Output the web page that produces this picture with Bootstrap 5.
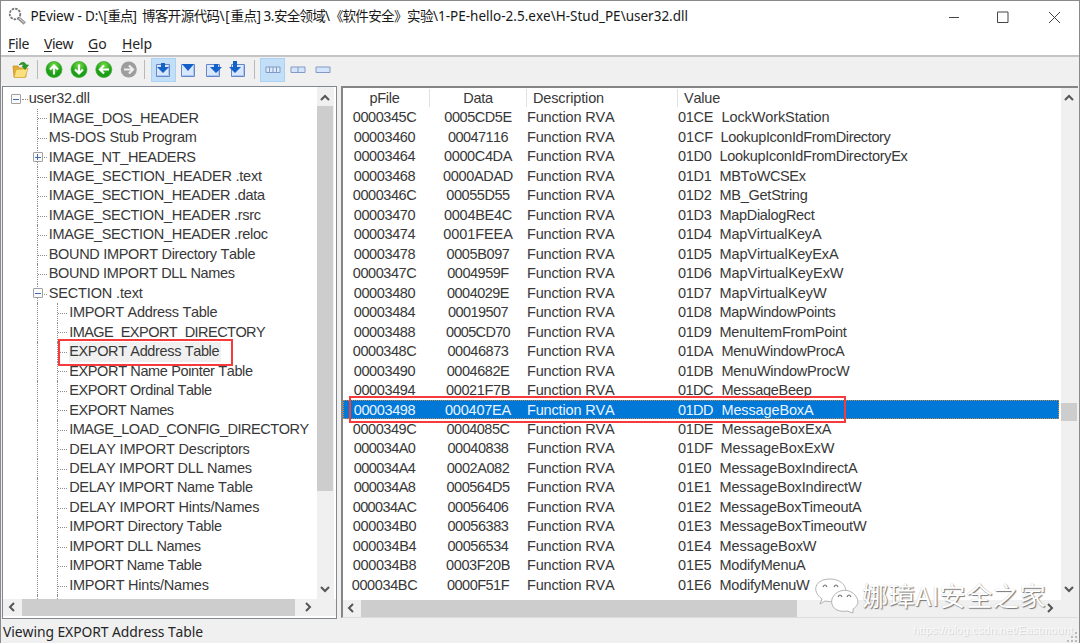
<!DOCTYPE html>
<html lang="zh-CN">
<head>
<meta charset="utf-8">
<title>PEview</title>
<link href="https://cdn.jsdelivr.net/npm/bootstrap@5.3.0/dist/css/bootstrap.min.css" rel="stylesheet">
<style>
html,body{height:100%;overflow:hidden}
body{font-family:"Liberation Sans","Noto Sans CJK SC",sans-serif;font-size:14.5px;line-height:19.48px;color:#383838;background:#f0f0f0}
svg{display:block;flex:none}
.win{width:1080px;height:643px;border:1px solid #8a8a8a;border-bottom:0}
.titlebar{height:32px;background:#fff;padding-left:5px;font-family:"Noto Sans","Noto Sans CJK SC",sans-serif;font-size:13.5px;color:#181818}
.titletext{margin-left:2.5px}
.fit{display:inline-block;flex:none;overflow:visible;font-kerning:none;white-space:pre}
.menus{height:22px;background:#fff;padding-left:7px;font-family:"Noto Sans","Open Sans",sans-serif;font-size:14px;color:#252525}
.menus .fit{margin-right:15px}
.menus u{text-underline-offset:2px;text-decoration-thickness:1px}
.tools{height:31px;border-top:2px solid #c4c4c4;background:#f0f0f0;padding-left:10px;padding-bottom:4px}
.rule{width:1.4px;height:19px;background:#b9b9b9}
.tool{width:25px;height:24px}
.tool.on{background:#c2dff7;border:1px solid #a9d2f5}
.panes{height:533px;padding-left:1px}
.treepane{width:335px;border:1px solid #828790;background:#fff;height:533px}
.listpane{width:737px;margin-left:4px;border-left:2px solid #858585;border-top:2px solid #858585;border-bottom:1px solid #dcdcdc;background:#fff;height:532px}
.view{height:512px;overflow:hidden}
.row2{height:19.48px;padding-top:1px}
#tree{padding-top:1.6px}
#tree .row2 .fit{margin-left:.7px}
.vbar{width:17px;background:#f0f0f0;height:512px;padding-right:1px}
.hbar{height:17px;background:#f0f0f0;flex:none}
.thumb{background:#cdcdcd}
.guide{border-left:1px dotted #8e8e8e;height:19.48px;flex:none}
.dash{height:0;border-top:1px dotted #8e8e8e;margin-top:1px;flex:none}
.knob{left:-5px;top:4.500px;width:10px;height:10px;border:1px solid #a0a0a0;border-radius:1px;background:#fafafa}
.knob:before{content:"";position:absolute;left:1px;right:1px;top:3.5px;height:1px;background:#4068b8}
.knob.plus:after{content:"";position:absolute;top:1px;bottom:1px;left:3.5px;width:1px;background:#4068b8}
.picked{background:#f0f0f0;padding-right:2px}
.c1{width:87px;padding-right:3px;border-right:1px solid transparent}
.c2{width:97px;border-right:1px solid transparent}
.c3{width:151px;border-right:1px solid transparent}
.head .c1,.head .c2,.head .c3{border-color:#e0e0e0}
.sel{background:#0078d7;color:#e8f4ff;outline:1px dotted #c28a4c;outline-offset:-1px;margin-right:2px}
.red{border:2px solid #f53b3b}
.status{height:24px;padding:2.5px 0 0 2px;font-family:"Noto Sans","Open Sans",sans-serif;font-size:13.9px;color:#252525}
.wechat{left:812px;top:574px}
.wm{left:861px;top:576px;font:26.2px/36px "Noto Sans CJK SC",sans-serif;color:#fff;text-shadow:1px 1px 1px #777,0 0 1px #bbb}
.url{left:912px;top:620px;font-size:11.2px;color:#fafafa;text-shadow:1px 1px 0 #d8d8d8}
</style>
</head>
<body>
<div class="win position-relative d-flex flex-column">
  <header class="titlebar d-flex align-items-center">
    <svg width="22" height="22" viewBox="0 0 22 22"><circle cx="9" cy="8" r="5.3" fill="#fff" stroke="#777" stroke-width="1.8" stroke-dasharray="2.5 1"/><path d="M12.5 12l6.3 5.6" stroke="#929292" stroke-width="3.3"/><path d="M13 12l5.500 5" stroke="#ddd" stroke-width="1"/></svg>
    <div class="titletext d-flex" id="title"></div>
    <svg class="ms-auto" width="130" height="24" viewBox="0 0 130 24" fill="none" stroke="#444" stroke-width="1"><path d="M-1 12.500H10M48.500 7h10.500v10.500h-10.500zM100 7l11 11M111 7l-11 11"/></svg>
  </header>
  <nav class="menus d-flex align-items-center"><span class="fit" data-w="21"><u>F</u>ile</span><span class="fit" data-w="29"><u>V</u>iew</span><span class="fit" data-w="19"><u>G</u>o</span><span class="fit" data-w="30"><u>H</u>elp</span></nav>
  <div class="tools d-flex align-items-center">
    <svg width="20" height="20" viewBox="0 0 20 20"><path d="M2 6h5l1 2h7v9H3z" fill="#e7ad32" stroke="#c18a20" stroke-width=".7"/><path d="M5 9.500l12-1-3 9H3z" fill="#fbe17d" stroke="#d4a233" stroke-width=".7"/><path d="M8 5c3-4 6-3 7 0h2.500L14 9.500 11 6h2c-1-2-2-2-5-1z" fill="#2c9b24" stroke="#187719" stroke-width=".6"/></svg>
    <div class="rule" style="margin:0 7px 0 5.500px"></div>
    <svg width="94" height="19" viewBox="0 0 94 19">
      <defs><radialGradient id="g" cy=".25"><stop offset="0" stop-color="#79dd4b"/><stop offset="1" stop-color="#1a9f16"/></radialGradient></defs>
      <g fill="url(#g)" stroke="#3ca72c" stroke-width=".7"><circle cx="9" cy="9.500" r="8"/><circle cx="34" cy="9.500" r="8"/><circle cx="58.800" cy="9.500" r="8"/></g><circle cx="83.800" cy="9.500" r="8" fill="#9d9d9d"/>
      <g fill="none" stroke="#fff" stroke-width="2.200"><path d="M9 14.500V5.500M5 9.500l4-4 4 4M34 4.500v9M30 9.500l4 4 4-4M64 9.500H55M59 5.500l-4 4 4 4"/><path d="M79 9.500h9M84 5.500l4 4-4 4" stroke="#eee"/></g>
    </svg>
    <div class="rule" style="margin:0 5.500px 0 5px"></div>
    <div class="tool on d-flex align-items-center justify-content-center"><svg width="18" height="18" viewBox="0 0 18 18"><use href="#sq"/><path d="M7 2h4v4h4l-6 6-6-6h4z" fill="#1260c8"/></svg></div>
    <div class="tool d-flex align-items-center justify-content-center"><svg width="18" height="18" viewBox="0 0 18 18"><g id="sq"><path d="M2.500 3.500h13v12h-13z" fill="#d8e7fc" stroke="#6687c7"/><path d="M3.500 14.500h11v-10" fill="none" stroke="#a9c4ef"/></g><path d="M3 3h12L9 10z" fill="#1260c8"/></svg></div>
    <div class="tool d-flex align-items-center justify-content-center"><svg width="18" height="18" viewBox="0 0 18 18"><use href="#sq"/><path d="M10 3h4v3h4l-6 6-6-6h4z" fill="#1260c8"/></svg></div>
    <div class="tool d-flex align-items-center justify-content-center"><svg width="18" height="18" viewBox="0 0 18 18"><use href="#sq"/><path d="M4 0h4v6h4l-6 6-6-6h4z" fill="#1260c8"/></svg></div>
    <div class="rule" style="margin:0 5px 0 3px"></div>
    <div class="tool on d-flex align-items-center justify-content-center"><svg width="16" height="8" viewBox="0 0 16 8"><path d="M1 1h14v5.500H1zM4.500 1v6M8 1v6M11.500 1v6" fill="#dceafd" stroke="#8399c4"/></svg></div>
    <div class="tool d-flex align-items-center justify-content-center"><svg width="16" height="8" viewBox="0 0 16 8"><path d="M1 1h14v5.500H1zM8 1v6" fill="#d3e4fb" stroke="#8399c4"/></svg></div>
    <div class="tool d-flex align-items-center justify-content-center"><svg width="16" height="8" viewBox="0 0 16 8"><path d="M1 1h14v5.500H1z" fill="#d3e4fb" stroke="#8399c4"/></svg></div>
  </div>
  <main class="panes d-flex">
    <section class="treepane d-flex flex-column">
      <div class="d-flex">
        <div class="view flex-grow-1" id="tree"></div>
        <div class="vbar d-flex flex-column align-items-center"><svg width="16" height="19" viewBox="0 0 16 19"><path d="M4 13l4-4 4 4" fill="none" stroke="#555" stroke-width="2"/></svg><div class="thumb w-100" style="height:385px"></div><svg class="mt-auto" width="16" height="17" viewBox="0 0 16 17"><path d="M4 5l4 4 4-4" fill="none" stroke="#555" stroke-width="2"/></svg></div>
        <div style="width:2px;background:#fff"></div>
      </div>
      <div class="hbar d-flex"><svg width="19" height="17" viewBox="0 0 19 17"><path d="M11 4L7 8l4 4" fill="none" stroke="#555" stroke-width="2"/></svg><div class="thumb" style="width:273px"></div><svg width="24" height="17" viewBox="0 0 24 17"><path d="M11 4l4 4-4 4" fill="none" stroke="#555" stroke-width="2"/></svg></div>
    </section>
    <section class="listpane d-flex flex-column">
      <div class="d-flex">
        <div class="view flex-grow-1" id="list"></div>
        <div class="vbar d-flex flex-column align-items-center"><svg width="16" height="17" viewBox="0 0 16 17"><path d="M4 12l4-4 4 4" fill="none" stroke="#555" stroke-width="2"/></svg><div class="thumb w-100" style="height:18px;margin-top:298px"></div><svg class="mt-auto" width="16" height="17" viewBox="0 0 16 17"><path d="M4 4l4 4 4-4" fill="none" stroke="#555" stroke-width="2"/></svg></div>
      </div>
      <div class="hbar d-flex"><svg width="18" height="17" viewBox="0 0 18 17"><path d="M10 4L6 8l4 4" fill="none" stroke="#555" stroke-width="2"/></svg><div class="thumb" style="width:436px"></div><svg class="ms-auto" width="34" height="17" viewBox="0 0 34 17"><path d="M4 4l4 4-4 4" fill="none" stroke="#555" stroke-width="2"/></svg></div>
    </section>
  </main>
  <footer class="status d-flex"><span class="fit" data-w="200">Viewing EXPORT Address Table</span></footer>
  <svg class="position-absolute bottom-0 end-0" width="12" height="12" viewBox="0 0 12 12" fill="#bbb"><path d="M8 1h2v2H8zM8 5h2v2H8zM8 9h2v2H8zM4 5h2v2H4zM4 9h2v2H4zM0 9h2v2H0z"/></svg>
  <div class="red position-absolute" style="left:57px;top:338px;width:175px;height:27px"></div>
  <div class="red position-absolute" style="left:348px;top:395px;width:497px;height:27px"></div>
  <svg class="wechat position-absolute" width="46" height="42" viewBox="0 0 46 42"><g fill="#fff" stroke="#aaa" stroke-width=".9"><path d="M7 29l2-5C-2 16 2 4 17 4c13 0 19 10 14 17s-11 6-19 5z"/><path d="M40 38l-6-2c-11 2-17-5-15-12 3-9 16-12 23-4 5 6 3 11-2 14z"/></g><path d="M10 12q2-4 4 0M21 12q2-4 4 0M25 22q2-4 4 0M34 22q2-4 4 0" fill="none" stroke="#777" stroke-width="1.200"/></svg>
  <span class="wm position-absolute fit" data-w="184">娜璋AI安全之家</span>
  <span class="url position-absolute fit" data-w="160">https://blog.csdn.net/Eastmount</span>
</div>
<script src="https://cdn.jsdelivr.net/npm/bootstrap@5.3.0/dist/js/bootstrap.bundle.min.js"></script>
<script>
const span = (text, w, cls = '') => `<span class="fit ${cls}" data-w="${w}">${text}</span>`;
document.getElementById('title').innerHTML = [
  ['PEview - D:\\[', 77], ['重点', 25], ['] ', 9.5], ['博客开源代码', 77.5], ['\\[', 11], ['重点', 26], ['] 3.', 17.5],
  ['安全领域', 51], ['\\', 5], ['《', 12.5], ['软件安全', 51.5], ['》', 13], ['实验', 26], ['\\1-PE-hello-2.5.exe\\H-Stud_PE\\user32.dll', 255]
].map(s => span(...s)).join('');

// label, depth, right edge, knob
const tree = [
  ['user32.dll',0,89,'-'],['IMAGE_DOS_HEADER',1,198],['MS-DOS Stub Program',1,196],['IMAGE_NT_HEADERS',1,195,'+'],
  ['IMAGE_SECTION_HEADER .text',1,261],['IMAGE_SECTION_HEADER .data',1,264],['IMAGE_SECTION_HEADER .rsrc',1,260],['IMAGE_SECTION_HEADER .reloc',1,267],
  ['BOUND IMPORT Directory Table',1,254.5],['BOUND IMPORT DLL Names',1,234],['SECTION .text',1,142,'-'],
  ['IMPORT Address Table',2,216.5],['IMAGE_EXPORT_DIRECTORY',2,264.5],['EXPORT Address Table',2,218.5],['EXPORT Name Pointer Table',2,252],
  ['EXPORT Ordinal Table',2,211],['EXPORT Names',2,173],['IMAGE_LOAD_CONFIG_DIRECTORY',2,308],['DELAY IMPORT Descriptors',2,249],
  ['DELAY IMPORT DLL Names',2,251],['DELAY IMPORT Name Table',2,252],['DELAY IMPORT Hints/Names',2,258.5],['IMPORT Directory Table',2,221],
  ['IMPORT DLL Names',2,200],['IMPORT Name Table',2,201],['IMPORT Hints/Names',2,208],['',2,70]];
const starts = [28, 48, 68.5];
document.getElementById('tree').innerHTML = tree.map(([t, d, end, k], i) => {
  const knob = k ? `<i class="knob position-absolute ${k === '+' ? 'plus' : ''}"></i>` : '';
  const lead = d === 0 ? '<div style="width:13px"></div><div class="position-relative h-100 d-flex align-items-center" style="width:12px">' + knob + '<div class="dash ms-auto" style="width:6px"></div></div>'
    : `<div style="width:33.500px" class="flex-shrink-0"></div>` + (d === 2 ? '<div class="guide" style="width:20.500px"></div>' : '')
      + `<div class="guide position-relative d-flex align-items-center" style="width:11.500px"><div class="dash" style="width:9px"></div>${knob}</div>`;
  return `<div class="row2 d-flex align-items-center">${lead}${t ? span(t, end - starts[d], i === 13 ? 'picked' : '') : ''}</div>`;
}).join('');

const names = [
  ['0005CD5E',67.5,'LockWorkStation',722,829],['00047116',60,'LookupIconIdFromDirectory',721,890],['0000C4DA',68,'LookupIconIdFromDirectoryEx',720,907],
  ['0000ADAD',70,'MBToWCSEx',720,805],['00055D55',63.5,'MB_GetString',720,807],['0004BE4C',68,'MapDialogRect',720,814],['0001FEEA',69.5,'MapVirtualKeyA',720,821],
  ['0005B097',63,'MapVirtualKeyExA',720,838],['0004959F',61.5,'MapVirtualKeyExW',720,843],['0004029E',62,'MapVirtualKeyW',720,826],['00019507',60,'MapWindowPoints',720,835],
  ['0005CD70',64,'MenuItemFromPoint',720,846],['00046873',61,'MenuWindowProcA',722,844],['0004682E',62.5,'MenuWindowProcW',722,849],['00021F7B',64,'MessageBeep',722,811],
  ['000407EA',66,'MessageBoxA',722,813],['0004085C',63,'MessageBoxExA',722,831],['00040838',61,'MessageBoxExW',721,834],['0002A082',62.5,'MessageBoxIndirectA',720,857],
  ['000564D5',63,'MessageBoxIndirectW',720,861],['00056406',61,'MessageBoxTimeoutA',720,861],['00056383',61,'MessageBoxTimeoutW',720,866],['00056534',61,'MessageBoxW',720,816],
  ['0003F20B',64,'ModifyMenuA',720,805],['0000F51F',62,'ModifyMenuW',720,809]];
const hex = (n, l) => n.toString(16).toUpperCase().padStart(l, '0');
let html = `<div class="row2 head d-flex"><div class="c1 text-center">${span('pFile', 30)}</div><div class="c2 text-center">${span('Data', 29.5)}</div><div class="c3" style="padding-left:6px">${span('Description', 71)}</div><div style="padding-left:6px">${span('Value', 36)}</div></div>`;
names.forEach(([data, dw, name, s, e], i) => {
  const off = hex(0x345C + i * 4, 8), code = hex(0x1CE + i, 4);
  const pw = /[BC].?$/.test(off) ? (off.endsWith('BC') ? 65.5 : 63.5) : 61.5;
  html += `<div class="row2 d-flex ${i === 15 ? 'sel' : ''}"><div class="c1 text-center">${span(off, pw)}</div><div class="c2 text-center">${span(data, dw)}</div><div class="c3">${span('Function RVA', 87.5)}</div><div class="d-flex"><div style="width:${s - 678.5}px">${span(code, /[A-F]$/.test(code) ? 35 : 33.5)}</div>${span(name, e - s + 1)}</div></div>`;
});
document.getElementById('list').innerHTML = html;

document.querySelectorAll('.fit').forEach(el => {
  const want = +el.dataset.w, n = [...el.textContent].length;
  const range = document.createRange();
  range.selectNodeContents(el);
  el.style.letterSpacing = (want - range.getBoundingClientRect().width) / n + 'px';
});
</script>
</body>
</html>
